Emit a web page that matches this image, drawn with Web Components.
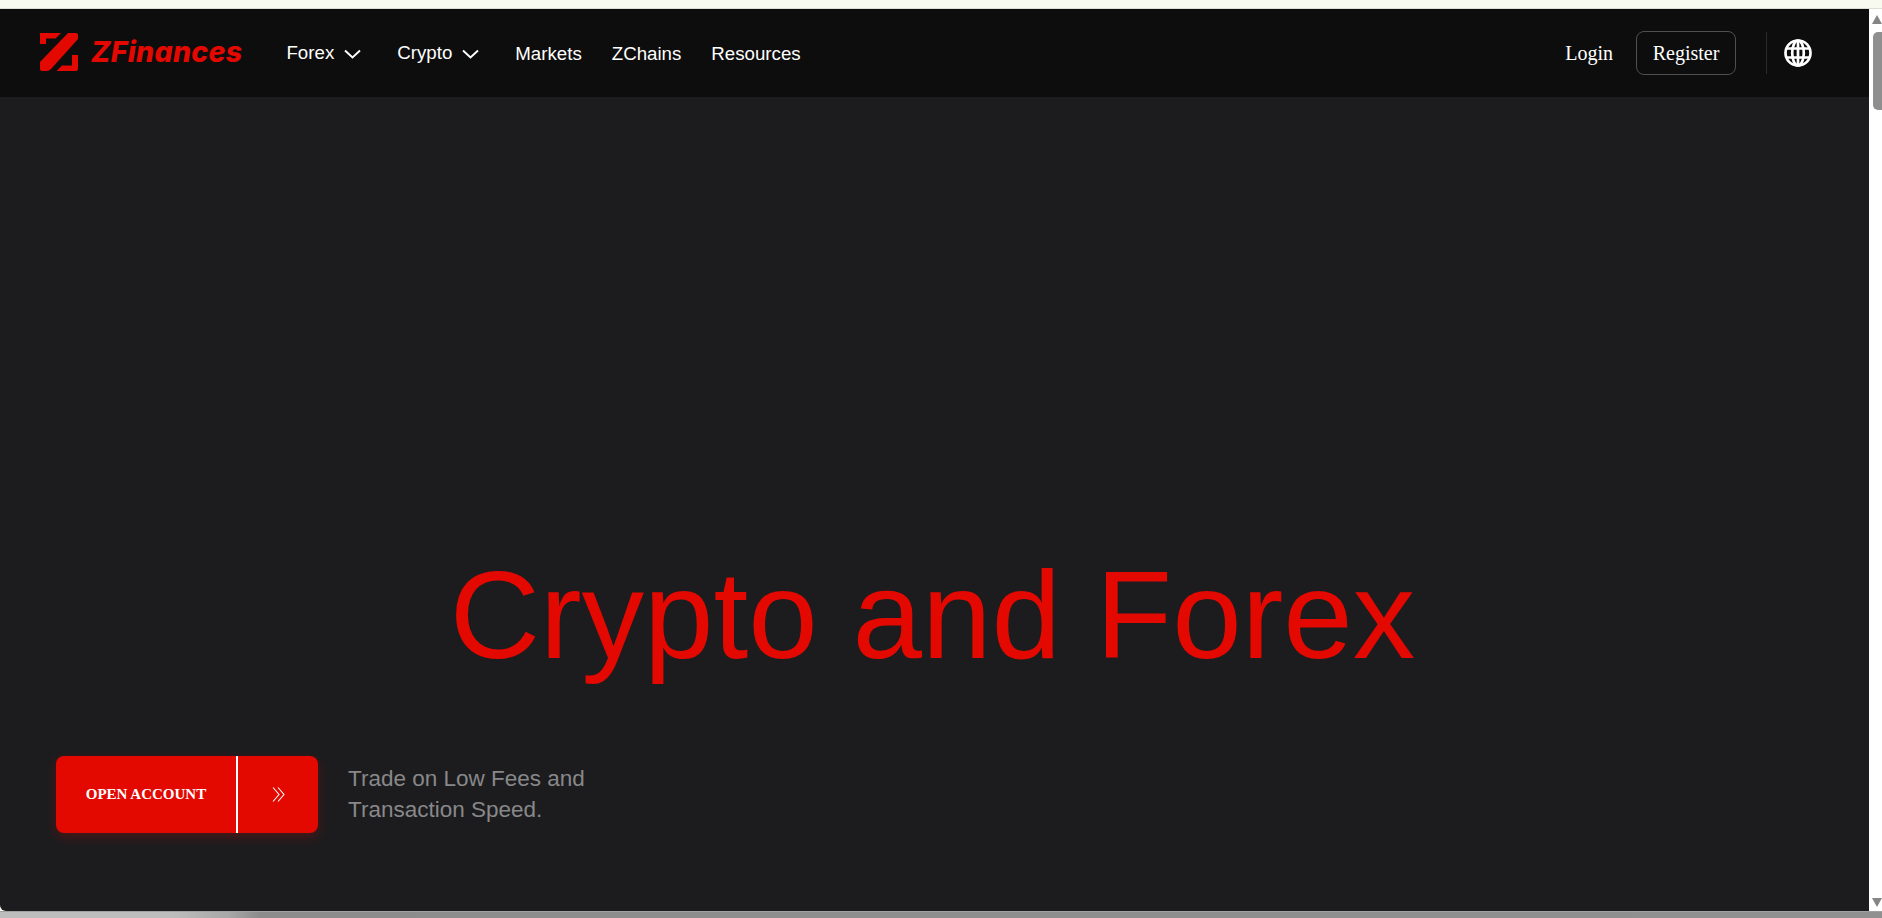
<!DOCTYPE html>
<html lang="en"><head><meta charset="utf-8"><title>ZFinances</title>
<style>
html,body{margin:0;padding:0;height:100%;overflow:hidden;background:#f8f9ef;font-family:"Liberation Sans",Arial,sans-serif}
</style></head><body>
<template id="t-window"><style>
:host{display:flex;flex-direction:column;width:1882px;height:918px;overflow:hidden}
.top{height:8px;background:#f8f9ef;border-bottom:1px solid #dcddd4;flex:none}
.mid{flex:1;display:flex;min-height:0}
.view{flex:1;min-width:0;display:flex;flex-direction:column;background:#1c1c1e;border-bottom-left-radius:6px;overflow:hidden}
.bottom{height:7px;flex:none;background:linear-gradient(90deg,#bdbdbd 0,#bdbdbd 170px,#a8a8a8 228px,#8c8c8c 260px,#909090 100%);border-top:1px solid #a0a0a0;box-sizing:border-box}
</style><div class="top"></div><div class="mid"><div class="view"><slot></slot></div><slot name="bar"></slot></div><div class="bottom"></div></template>

<template id="t-scroll"><style>
:host{display:flex;flex-direction:column;align-items:flex-end;width:13px;flex:none;background:#fff}
.up,.down{width:0;height:0;border-left:5px solid transparent;border-right:5px solid transparent;flex:none}
.up{border-bottom:9px solid #858585;margin-top:6px}
.thumb{width:9px;height:78px;background:#8f8f8f;border-radius:5px 0 0 5px;margin-top:8px;flex:none}
.fill{flex:1}
.down{border-top:9px solid #858585;margin-bottom:4px}
</style><div class="up"></div><div class="thumb"></div><div class="fill"></div><div class="down"></div></template>

<template id="t-header"><style>
:host{display:flex;align-items:center;height:88px;flex:none;background:#0d0d0d;box-sizing:border-box;padding:0 57px 0 40px}
.nav{display:flex;align-items:center;margin-left:44px;gap:30px;flex:1;padding-top:2px}
.right{display:flex;align-items:center}
</style><zf-logo></zf-logo><div class="nav"><slot name="nav"></slot></div><div class="right"><slot name="right"></slot></div></template>

<template id="t-logo"><style>
:host{display:flex;align-items:center;gap:13px;color:#e30800;margin-top:-3px}
svg{display:block}
span{font:italic 800 28.500px/1 Inter,"Liberation Sans",sans-serif;letter-spacing:.3px;position:relative;top:1px}
</style><svg width="38" height="38" viewBox="0 0 38 38" fill="#e30800"><path d="M0 0h21l-5.500 5.500H6V11H0z"/><path d="M28 0h8q2 0 2 2v4L11 36q-2 2-4 2H2q-2 0-2-2v-7z"/><path d="M32 22h6v14q0 2-2 2H16.500l5.500-5.500h10z"/></svg><span>ZFinances</span></template>

<template id="t-link"><style>
:host{display:inline-flex;align-items:center;color:#fff;font:18.700px/24px "Liberation Sans",Arial,sans-serif;white-space:nowrap}
:host([menu]){gap:10px;position:relative;top:-1px;margin-right:6px}
svg{display:none}
:host([menu]) svg{display:block;margin-top:2px}
</style><slot></slot><svg width="17" height="10" viewBox="0 0 17 10" fill="none" stroke="#fff" stroke-width="1.900"><path d="M1 1.500l7.500 7 7.500-7"/></svg></template>

<template id="t-auth"><style>
:host{display:flex;align-items:center;font:20px/24px "Liberation Serif","Times New Roman",serif;color:#fff}
.login{margin-right:23px}
.reg{box-sizing:border-box;height:44px;width:100px;display:flex;align-items:center;justify-content:center;border:1px solid #4f4f4f;border-radius:8px}
.sep{width:1px;height:42px;background:#2c2c2c;margin:0 17px 0 30px}
svg{display:block}
</style><span class="login">Login</span><span class="reg">Register</span><span class="sep"></span><svg width="28" height="28" viewBox="0 0 28 28" fill="none" stroke="#fff" stroke-width="2.700"><circle cx="14" cy="14" r="12.500"/><ellipse cx="14" cy="14" rx="5.800" ry="12.500"/><path d="M14 1.500v25M2.500 9.500h23M2.500 18.500h23"/></svg></template>

<template id="t-hero"><style>
:host{display:flex;flex-direction:column;flex:1;min-height:0;box-sizing:border-box;padding:0 0 78px 56px}
h1{margin:auto 0 0;font:400 125px/1 "Liberation Sans",Arial,sans-serif;color:#e30800;text-align:center;padding-right:60px}
.cta{display:flex;align-items:flex-start;gap:30px;margin-top:79px}
</style><h1><slot name="title"></slot></h1><div class="cta"><zf-button><slot name="button"></slot></zf-button><zf-tagline><slot name="tag"></slot></zf-tagline></div></template>

<template id="t-button"><style>
:host{display:flex;width:262px;height:77px;border-radius:8px;background:#e30800;color:#fff;box-shadow:0 4px 12px rgba(227,8,0,.25);font:700 15px/1 "Liberation Serif","Times New Roman",serif;overflow:hidden}
.l{width:180px;display:flex;align-items:center;justify-content:center;border-right:2px solid #fff;box-sizing:content-box}
.r{flex:1;display:flex;align-items:center;justify-content:center}
svg{display:block}
</style><div class="l"><slot></slot></div><div class="r"><svg width="13" height="15" viewBox="0 0 13 15" fill="none" stroke="#fff" stroke-width="1.100"><path d="M1 .5l6 7-6 7M6 .5l6 7-6 7"/></svg></div></template>

<template id="t-tag"><style>
:host{display:block;color:#88888a;font:22.500px/31px "Liberation Sans",Arial,sans-serif;margin-top:7px}
</style><slot></slot></template>

<zf-window>
  <zf-scrollbar slot="bar"></zf-scrollbar>
  <zf-header>
    <zf-link slot="nav" menu>Forex</zf-link>
    <zf-link slot="nav" menu>Crypto</zf-link>
    <zf-link slot="nav">Markets</zf-link>
    <zf-link slot="nav">ZChains</zf-link>
    <zf-link slot="nav">Resources</zf-link>
    <zf-auth slot="right"></zf-auth>
  </zf-header>
  <zf-hero>
    <span slot="title">Crypto and Forex</span>
    <span slot="button">OPEN ACCOUNT</span>
    <span slot="tag">Trade on Low Fees and<br>Transaction Speed.</span>
  </zf-hero>
</zf-window>
<script>
const map={'zf-window':'t-window','zf-scrollbar':'t-scroll','zf-header':'t-header','zf-logo':'t-logo','zf-link':'t-link','zf-auth':'t-auth','zf-hero':'t-hero','zf-button':'t-button','zf-tagline':'t-tag'};
for(const [n,id] of Object.entries(map)){
  customElements.define(n,class extends HTMLElement{
    constructor(){super();this.attachShadow({mode:'open'}).appendChild(document.getElementById(id).content.cloneNode(true));}
  });
}
</script>
</body></html>
